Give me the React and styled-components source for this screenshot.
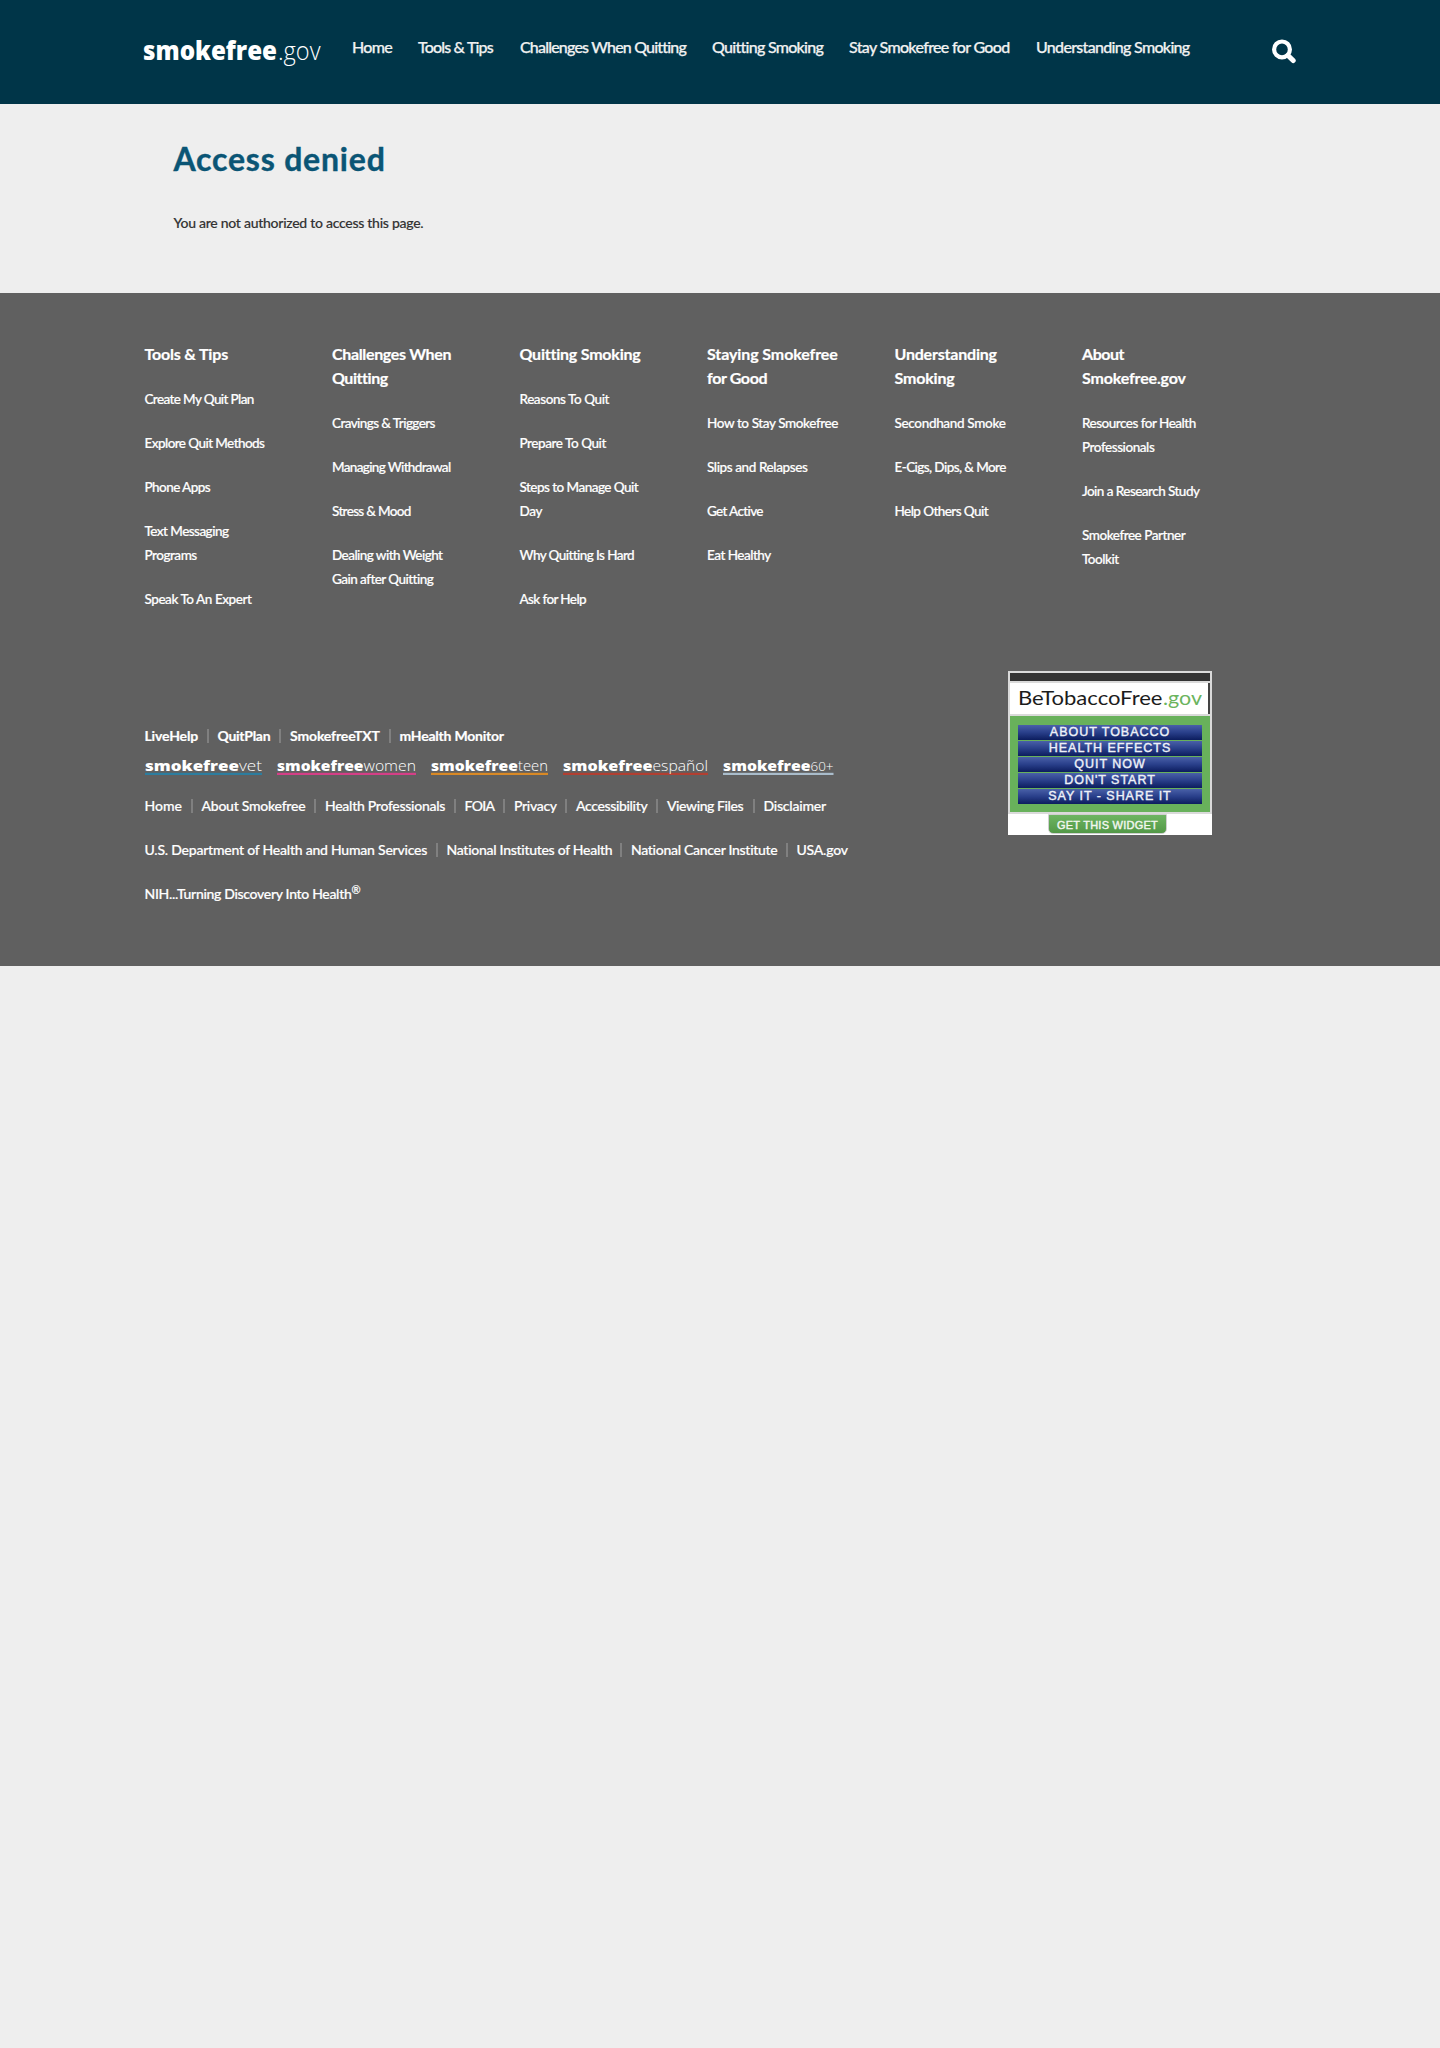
import React from "react";
import styled, { createGlobalStyle } from "styled-components";

const GlobalStyle = createGlobalStyle`
  *, *::before, *::after { box-sizing: border-box; }
  body {
    margin: 0;
    background: #eee;
    color: #333;
    font-family: Lato, "Open Sans", sans-serif;
    font-weight: 500;
    font-size: 14px;
    line-height: 24px;
  }
  a { color: inherit; text-decoration: none; }
  h1, h2, p, ul { margin: 0; padding: 0; }
  ul { list-style: none; }
`;

const Header = styled.header`
  height: 104px;
  padding: 0 144px 0 143px;
  display: flex;
  align-items: flex-start;
  background: #003548;
  color: #f1f1f1;
`;

const SiteLogo = styled.svg`
  display: block;
  flex: none;
  width: 180px;
  height: 44px;
  margin-top: 30px;
  margin-right: 29px;
  overflow: visible;
  font-family: "Open Sans", sans-serif;
  fill: #fff;
`;

const Nav = styled.nav`
  display: flex;
  gap: 26px;
  margin-top: 35px;
  font-size: 16px;
  -webkit-text-stroke: 0.25px currentColor;
`;

const TextLink = styled.a`
  display: block;
  flex: none;
  width: ${(p) => p.$width}px;
  letter-spacing: ${(p) => p.$track}px;
  white-space: nowrap;
`;

const SearchButton = styled.a`
  margin: 39px 0 0 auto;
  line-height: 0;
`;

const Main = styled.main`
  height: 189px;
  padding: 36px 173.5px 0;
`;

const Title = styled.h1`
  margin-bottom: 33px;
  color: #0a5575;
  font-size: 32px;
  font-weight: 700;
  line-height: 38px;
  letter-spacing: 0.8px;
  -webkit-text-stroke: 0.4px currentColor;
`;

const Message = styled.p`
  letter-spacing: -0.27px;
  -webkit-text-stroke: 0.15px currentColor;
`;

const Footer = styled.footer`
  height: 673px;
  padding: 49px 144px 0 144.5px;
  background: #606060;
  color: #fff;
  -webkit-text-stroke: 0.2px currentColor;
`;

const Columns = styled.div`
  display: grid;
  grid-template-columns: repeat(6, 187.5px);
  height: 329px;
`;

const ColumnTitle = styled.h2`
  margin-bottom: 21px;
  font-size: 16px;
  font-weight: 700;
  line-height: 24px;
`;

const ColumnLinks = styled.ul`
  display: flex;
  flex-direction: column;
  gap: 20px;
  font-size: 13.5px;
`;

const Line = styled.span`
  display: block;
  white-space: nowrap;
  letter-spacing: ${(p) => p.$track}px;
`;

const Bottom = styled.div`
  display: flex;
  align-items: flex-start;
`;

const LinkArea = styled.div`
  width: 863.5px;
  padding-top: 53px;
`;

const LinkRow = styled.div`
  display: flex;
  align-items: center;
  margin-bottom: ${(p) => p.$space}px;
  font-weight: ${(p) => (p.$bold ? 700 : 500)};
`;

const Divider = styled.span`
  flex: none;
  width: 2px;
  height: 14px;
  margin: 0 9px;
  background: #808080;
`;

const Brands = styled.div`
  display: flex;
  gap: 15.2px;
  height: 46px;
  -webkit-text-stroke: 0;
`;

const BrandMark = styled.svg`
  display: block;
  flex: none;
  height: 30px;
  overflow: visible;
  font-family: "Open Sans", sans-serif;
  fill: #fff;
`;

const Slogan = styled.p`
  letter-spacing: -0.31px;
  sup {
    font-size: 11px;
    line-height: 0;
    vertical-align: 5px;
    letter-spacing: 0;
  }
`;

const Widget = styled.aside`
  width: 204px;
  height: 164px;
  background: #fff;
  font-family: "Liberation Sans", Arial, sans-serif;
  -webkit-text-stroke: 0;
`;

const WidgetFrame = styled.div`
  display: flex;
  flex-direction: column;
  gap: 2px;
  padding: 2px;
  background: #dadada;
`;

const WidgetBar = styled.div`
  height: 8px;
  background: #333;
`;

const WidgetHead = styled.div`
  height: 31px;
  background: #fff;
  border-right: 2px solid #444;
`;

const WidgetTitle = styled.svg`
  display: block;
  width: 198px;
  height: 31px;
  font-family: Lato, sans-serif;
  font-size: 20px;
  font-weight: 400;
`;

const WidgetMenu = styled.div`
  display: flex;
  flex-direction: column;
  gap: 1px;
  height: 96px;
  padding: 9px 8px 0;
  background: #68b15b;
`;

const WidgetItem = styled.a`
  display: block;
  height: 15px;
  background: linear-gradient(#4960a8, #293f8a 50%, #0c1d5e);
  color: #eef1f8;
  font-size: 12.5px;
  line-height: 14px;
  letter-spacing: 0.97px;
  text-align: center;
  -webkit-text-stroke: 0.4px #eef1f8;
`;

const WidgetButton = styled.a`
  display: block;
  width: 119px;
  height: 20px;
  margin-left: 40px;
  border: 1px solid #cfcfcf;
  border-radius: 0 0 5px 5px;
  background: linear-gradient(#6db562, #539847);
  color: #f2f7f0;
  font-size: 11px;
  font-weight: 400;
  line-height: 20px;
  letter-spacing: 0.25px;
  text-align: center;
  white-space: nowrap;
  -webkit-text-stroke: 0.4px #f2f7f0;
`;

const navItems = [
  ["Home", 40, -0.73],
  ["Tools & Tips", 76, -0.83],
  ["Challenges When Quitting", 166, -0.81],
  ["Quitting Smoking", 111, -0.72],
  ["Stay Smokefree for Good", 161, -0.67],
  ["Understanding Smoking", 155, -0.69],
];

const columns = [
  {
    title: [["Tools & Tips", -0.18]],
    links: [
      [["Create My Quit Plan", -0.61]],
      [["Explore Quit Methods", -0.57]],
      [["Phone Apps", -0.57]],
      [["Text Messaging", -0.54], ["Programs", -0.48]],
      [["Speak To An Expert", -0.45]],
    ],
  },
  {
    title: [["Challenges When", -0.34], ["Quitting", -0.45]],
    links: [
      [["Cravings & Triggers", -0.58]],
      [["Managing Withdrawal", -0.66]],
      [["Stress & Mood", -0.66]],
      [["Dealing with Weight", -0.56], ["Gain after Quitting", -0.54]],
    ],
  },
  {
    title: [["Quitting Smoking", -0.22]],
    links: [
      [["Reasons To Quit", -0.42]],
      [["Prepare To Quit", -0.44]],
      [["Steps to Manage Quit", -0.53], ["Day", -0.32]],
      [["Why Quitting Is Hard", -0.58]],
      [["Ask for Help", -0.61]],
    ],
  },
  {
    title: [["Staying Smokefree", -0.1], ["for Good", -0.38]],
    links: [
      [["How to Stay Smokefree", -0.4]],
      [["Slips and Relapses", -0.4]],
      [["Get Active", -0.65]],
      [["Eat Healthy", -0.5]],
    ],
  },
  {
    title: [["Understanding", -0.2], ["Smoking", -0.18]],
    links: [
      [["Secondhand Smoke", -0.33]],
      [["E-Cigs, Dips, & More", -0.58]],
      [["Help Others Quit", -0.56]],
    ],
  },
  {
    title: [["About", -0.45], ["Smokefree.gov", -0.16]],
    links: [
      [["Resources for Health", -0.5], ["Professionals", -0.44]],
      [["Join a Research Study", -0.54]],
      [["Smokefree Partner", -0.46], ["Toolkit", -0.5]],
    ],
  },
];

const quickLinks = [
  ["LiveHelp", 53, -0.15],
  ["QuitPlan", 52.5, -0.28],
  ["SmokefreeTXT", 89.5, -0.14],
  ["mHealth Monitor", 105, -0.22],
];

const siteLinks = [
  ["Home", 37, 0],
  ["About Smokefree", 103.5, -0.25],
  ["Health Professionals", 119.5, -0.28],
  ["FOIA", 29.5, -0.65],
  ["Privacy", 42, -0.32],
  ["Accessibility", 71, -0.35],
  ["Viewing Files", 76.5, -0.42],
  ["Disclaimer", 62, -0.22],
];

const agencyLinks = [
  ["U.S. Department of Health and Human Services", 282, -0.22],
  ["National Institutes of Health", 164.5, -0.28],
  ["National Cancer Institute", 145.5, -0.29],
  ["USA.gov", 52, -0.23],
];

const brands = [
  { name: "vet", base: 94, rest: 23, color: "#2c7d9f" },
  { name: "women", base: 86.5, rest: 52.5, color: "#d43f87" },
  { name: "teen", base: 87, rest: 30, color: "#d98925" },
  { name: "español", base: 89.5, rest: 55.5, color: "#b23f31" },
  { name: "60+", base: 87.5, rest: 23, color: "#a9bccb", size: 13 },
];

const widgetItems = ["ABOUT TOBACCO", "HEALTH EFFECTS", "QUIT NOW", "DON'T START", "SAY IT - SHARE IT"];

function Lines({ lines }) {
  return lines.map(([text, track]) => (
    <Line key={text} $track={track}>{text}</Line>
  ));
}

function Links({ items, bold, space }) {
  return (
    <LinkRow $bold={bold} $space={space}>
      {items.map(([text, width, track], i) => (
        <React.Fragment key={text}>
          {i > 0 && <Divider />}
          <TextLink href="#" $width={width} $track={track}>{text}</TextLink>
        </React.Fragment>
      ))}
    </LinkRow>
  );
}

function Brand({ name, base, rest, color, size = 14.5 }) {
  const width = base + rest;
  return (
    <BrandMark width={width}>
      <rect y="24.8" width={width} height="2.2" fill={color} />
      <text y="23" fontSize="14.5" fontWeight="800" textLength={base} lengthAdjust="spacingAndGlyphs">smokefree</text>
      <text x={base} y="23" fontSize={size} fontWeight="350" textLength={rest} lengthAdjust="spacingAndGlyphs">{name}</text>
    </BrandMark>
  );
}

export default function App() {
  return (
    <>
      <GlobalStyle />
      <Header>
        <SiteLogo>
          <text x="0" y="30" fontSize="26" fontWeight="800" textLength="134" lengthAdjust="spacingAndGlyphs">smokefree</text>
          <text x="135" y="30" fontSize="26" fontWeight="350" textLength="42.5" lengthAdjust="spacingAndGlyphs">.gov</text>
        </SiteLogo>
        <Nav>
          {navItems.map(([text, width, track]) => (
            <TextLink href="#" key={text} $width={width} $track={track}>{text}</TextLink>
          ))}
        </Nav>
        <SearchButton href="#" aria-label="Search">
          <svg width="24" height="25" fill="none" stroke="#fff">
            <circle cx="10" cy="10.4" r="7.9" strokeWidth="4.2" />
            <path d="M16 16.4L21.2 21.6" strokeWidth="5" strokeLinecap="round" />
          </svg>
        </SearchButton>
      </Header>
      <Main>
        <Title>Access denied</Title>
        <Message>You are not authorized to access this page.</Message>
      </Main>
      <Footer>
        <Columns>
          {columns.map((col) => (
            <div key={col.title[0][0]}>
              <ColumnTitle><Lines lines={col.title} /></ColumnTitle>
              <ColumnLinks>
                {col.links.map((lines) => (
                  <li key={lines[0][0]}><a href="#"><Lines lines={lines} /></a></li>
                ))}
              </ColumnLinks>
            </div>
          ))}
        </Columns>
        <Bottom>
          <LinkArea>
            <Links items={quickLinks} bold space={0} />
            <Brands>
              {brands.map((b) => <Brand key={b.name} {...b} />)}
            </Brands>
            <Links items={siteLinks} space={20} />
            <Links items={agencyLinks} space={20} />
            <Slogan>NIH...Turning Discovery Into Health<sup>®</sup></Slogan>
          </LinkArea>
          <Widget>
            <WidgetFrame>
              <WidgetBar />
              <WidgetHead>
                <WidgetTitle>
                  <text x="8" y="21.5" fill="#1c1c1c" textLength="144.5" lengthAdjust="spacingAndGlyphs">BeTobaccoFree</text>
                  <text x="153" y="21.5" fill="#6bb45e" textLength="39" lengthAdjust="spacingAndGlyphs">.gov</text>
                </WidgetTitle>
              </WidgetHead>
              <WidgetMenu>
                {widgetItems.map((t) => <WidgetItem href="#" key={t}>{t}</WidgetItem>)}
              </WidgetMenu>
            </WidgetFrame>
            <WidgetButton href="#">GET THIS WIDGET</WidgetButton>
          </Widget>
        </Bottom>
      </Footer>
    </>
  );
}
